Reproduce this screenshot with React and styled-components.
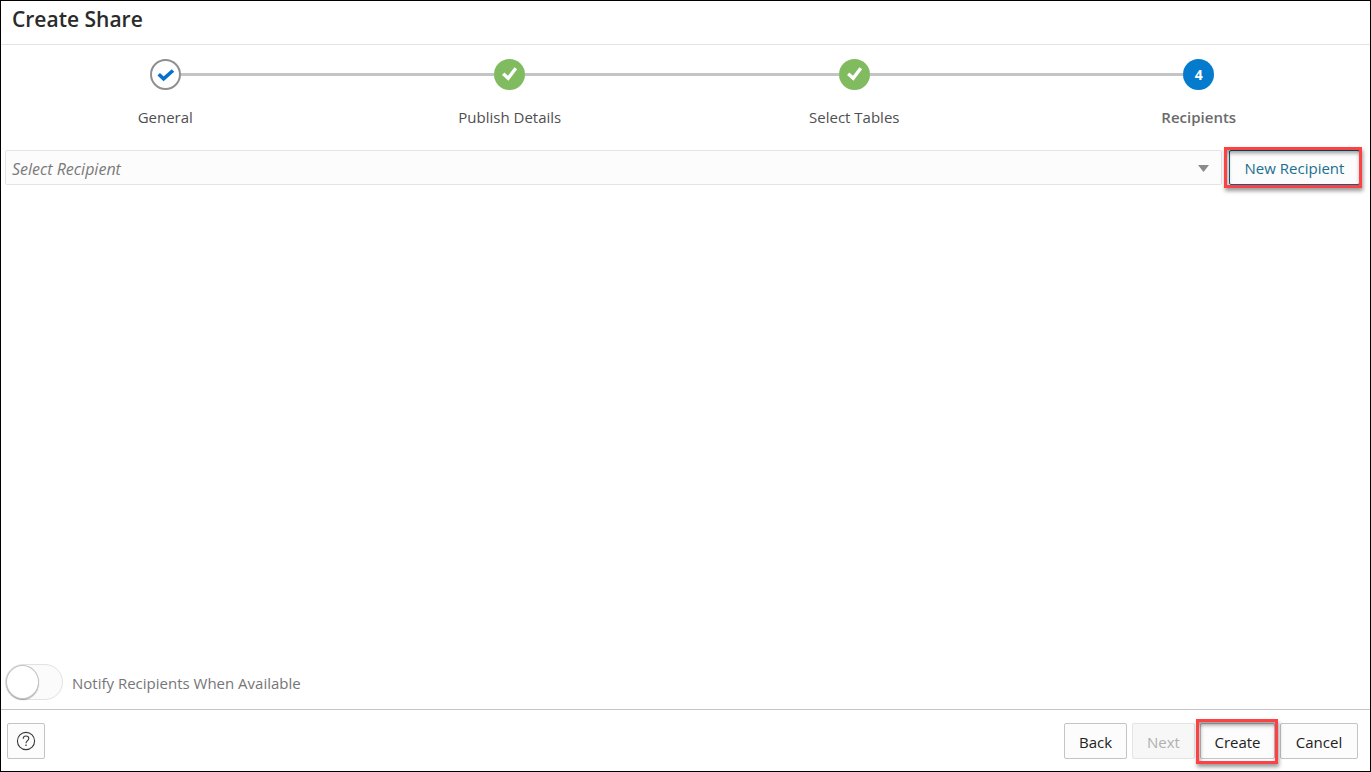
import React, { useState } from "react";
import styled, { createGlobalStyle } from "styled-components";

const steps = [
  { id: 1, label: "General", status: "visited" },
  { id: 2, label: "Publish Details", status: "done" },
  { id: 3, label: "Select Tables", status: "done" },
  { id: 4, label: "Recipients", status: "current" },
];

const App = () => {
  const [recipient, setRecipient] = useState("");
  const [notify, setNotify] = useState(false);

  return (
    <>
      <GlobalStyle />
      <Page>
        <Header>
          <Title>Create Share</Title>
        </Header>
        <Train>
          {steps.map((step) => (
            <Step key={step.id} aria-current={step.status === "current" ? "step" : undefined}>
              <Track>
                <Marker $status={step.status}>
                  {step.status === "current" && step.id}
                  {step.status === "visited" && (
                    <svg width="19" height="15" viewBox="0 0 19 15" aria-hidden="true">
                      <path d="M2.7 7.2 7.6 11.8 17 3.5" fill="none" stroke="#0572ce" strokeWidth="3.6" />
                    </svg>
                  )}
                  {step.status === "done" && (
                    <svg width="17" height="17" viewBox="0 0 17 17" aria-hidden="true">
                      <path d="M2.2 7.8 7.2 12.2 14.8 2.2" fill="none" stroke="#fff" strokeWidth="3.4" />
                    </svg>
                  )}
                </Marker>
              </Track>
              <StepLabel $current={step.status === "current"}>{step.label}</StepLabel>
            </Step>
          ))}
        </Train>
        <Main>
          <RecipientRow>
            <SelectBox>
              <Select
                aria-label="Select Recipient"
                value={recipient}
                onChange={(e) => setRecipient(e.target.value)}
              >
                <option value="">Select Recipient</option>
              </Select>
              <Arrow width="11" height="7" viewBox="0 0 11 7" aria-hidden="true">
                <path d="M0 0h11L5.5 7z" fill="#8b8b8b" />
              </Arrow>
            </SelectBox>
            <Highlight $inset="-3px -2px -3px -5px">
              <Button $variant="outlined" $width="131px">New Recipient</Button>
            </Highlight>
          </RecipientRow>
          <SwitchLabel>
            <Switch
              type="checkbox"
              role="switch"
              checked={notify}
              onChange={(e) => setNotify(e.target.checked)}
            />
            <span>Notify Recipients When Available</span>
          </SwitchLabel>
        </Main>
        <Footer>
          <IconButton $width="38px" aria-label="Help">
            <svg width="20" height="20" viewBox="0 0 20 20" fill="none" stroke="#3a3a3a" aria-hidden="true">
              <circle cx="10" cy="10" r="8.6" strokeWidth="1.1" />
              <path d="M7.2 7.8C7.2 6 8.4 5 10 5s2.8 1 2.8 2.5C12.8 9.5 10 9.8 10 12.3" strokeWidth="1.1" />
              <path d="M10 13.6V15" strokeWidth="1.3" />
            </svg>
          </IconButton>
          <Actions>
            <Button $width="63px">Back</Button>
            <Button $width="63px" disabled>Next</Button>
            <Highlight $inset="-4px -3px -5px -4px">
              <Button $width="75px">Create</Button>
            </Highlight>
            <Button $width="78px">Cancel</Button>
          </Actions>
        </Footer>
      </Page>
    </>
  );
};

export default App;

const GlobalStyle = createGlobalStyle`
  * {
    box-sizing: border-box;
  }
  body {
    margin: 0;
    background: #fff;
  }
  body, button, select, input {
    font-family: "Open Sans", "Noto Sans", sans-serif;
    font-size: 15px;
  }
`;

const Page = styled.div`
  display: flex;
  flex-direction: column;
  min-height: 100vh;
  border: 1px solid #000;
  overflow: hidden;
`;

const Header = styled.header`
  height: 44px;
  padding: 4px 11px;
  border-bottom: 1px solid #e4e4e4;
`;

const Title = styled.h1`
  margin: 0;
  color: #2b2b2b;
  font-size: 21px;
  font-weight: 600;
  line-height: 28px;
`;

const Train = styled.ol`
  display: flex;
  margin: 0 -1px 0 -8px;
  padding: 14px 0 0;
  list-style: none;
`;

const Step = styled.li`
  flex: 1;
  text-align: center;
`;

const Track = styled.div`
  display: flex;
  align-items: center;

  &::before,
  &::after {
    content: "";
    flex: 1;
    height: 3px;
    background: #c4c4c4;
  }
  ${Step}:first-child &::before,
  ${Step}:last-child &::after {
    background: transparent;
  }
`;

const markerColors = {
  visited: "#fff",
  done: "#81bb5f",
  current: "#057bcd",
};

const Marker = styled.span`
  display: flex;
  align-items: center;
  justify-content: center;
  width: 31px;
  height: 31px;
  border: ${(p) => (p.$status === "visited" ? "2px solid #8f8f8f" : "0")};
  border-radius: 50%;
  background: ${(p) => markerColors[p.$status]};
  color: #fff;
  font-size: 14px;
  font-weight: 700;
`;

const StepLabel = styled.div`
  margin-top: 15px;
  color: ${(p) => (p.$current ? "#6b6b6b" : "#4f4f4f")};
  font-size: 15px;
  font-weight: ${(p) => (p.$current ? 600 : 400)};
  line-height: 24px;
`;

const Main = styled.main`
  display: flex;
  flex: 1;
  flex-direction: column;
  justify-content: space-between;
  padding: 21px 10px 9px 4px;
`;

const RecipientRow = styled.div`
  display: flex;
  gap: 7px;
`;

const SelectBox = styled.div`
  position: relative;
  flex: 1;
`;

const Select = styled.select`
  appearance: none;
  display: block;
  width: 100%;
  height: 35px;
  padding: 2px 32px 0 6px;
  border: 1px solid #e4e4e4;
  border-radius: 2px;
  background: #fcfcfc;
  color: #7a7a7a;
  font-size: 16px;
  font-style: italic;
`;

const Arrow = styled.svg`
  position: absolute;
  top: 15px;
  right: 13px;
  pointer-events: none;
`;

const Button = styled.button`
  display: flex;
  align-items: center;
  justify-content: center;
  width: ${(p) => p.$width};
  height: ${(p) => (p.$variant === "outlined" ? "35px" : "36px")};
  padding: ${(p) => (p.$variant === "outlined" ? "0" : "2px 0 0")};
  border: 1px solid ${(p) => (p.$variant === "outlined" ? "#0b6483" : "#c4c4c4")};
  border-radius: 2px;
  background: #fcfcfc;
  color: ${(p) => (p.$variant === "outlined" ? "#1b6f8f" : "#222")};
  white-space: nowrap;
  cursor: pointer;

  &:disabled {
    border-color: #e4e4e4;
    background: #f7f7f7;
    color: #b0b0b0;
    cursor: default;
  }
`;

const IconButton = styled(Button)`
  padding: 0;
`;

const Highlight = styled.div`
  position: relative;

  &::after {
    content: "";
    position: absolute;
    inset: ${(p) => p.$inset};
    border: 3px solid #fc4242;
    box-shadow: 1px 3px 4px rgba(0, 0, 0, 0.4), inset 1px 3px 4px rgba(0, 0, 0, 0.4);
    pointer-events: none;
  }
`;

const SwitchLabel = styled.label`
  display: flex;
  align-items: center;
  align-self: flex-start;
  gap: 9px;
  color: #767676;

  span {
    padding-top: 2px;
  }
`;

const Switch = styled.input`
  appearance: none;
  display: flex;
  align-items: center;
  width: 58px;
  height: 36px;
  margin: 0;
  border: 1px solid #e2e2e2;
  border-radius: 18px;
  background: #fbfbfb;
  cursor: pointer;

  &::before {
    content: "";
    box-sizing: border-box;
    width: 33px;
    height: 34px;
    border: 1px solid #c4c4c4;
    border-radius: 50%;
    background: #fff;
    box-shadow: 0 1px 1px rgba(0, 0, 0, 0.3);
  }
  &:checked::before {
    margin-left: auto;
  }
`;

const Footer = styled.footer`
  display: flex;
  align-items: center;
  justify-content: space-between;
  padding: 13px 12px 12px 6px;
  border-top: 1px solid #c4c4c4;
`;

const Actions = styled.div`
  display: flex;
  gap: 5px;
`;
